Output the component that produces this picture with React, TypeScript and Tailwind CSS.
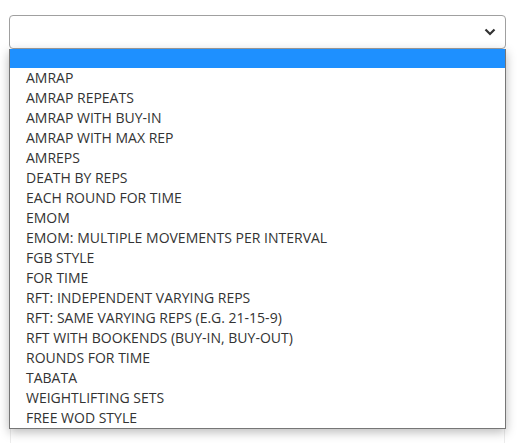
const options = [
  "AMRAP",
  "AMRAP REPEATS",
  "AMRAP WITH BUY-IN",
  "AMRAP WITH MAX REP",
  "AMREPS",
  "DEATH BY REPS",
  "EACH ROUND FOR TIME",
  "EMOM",
  "EMOM: MULTIPLE MOVEMENTS PER INTERVAL",
  "FGB STYLE",
  "FOR TIME",
  "RFT: INDEPENDENT VARYING REPS",
  "RFT: SAME VARYING REPS (E.G. 21-15-9)",
  "RFT WITH BOOKENDS (BUY-IN, BUY-OUT)",
  "ROUNDS FOR TIME",
  "TABATA",
  "WEIGHTLIFTING SETS",
  "FREE WOD STYLE",
];

export default function App() {
  return (
    <div className="h-[443px] w-[519px] overflow-hidden bg-white pt-[15px] font-['Open_Sans',sans-serif] text-[14px] text-[#333]">
      <div className="relative ml-[9px] w-[497px]">
        <div className="flex h-[34px] items-center justify-end rounded-[4px] border border-[#a0a0a0] bg-white pr-[9px]">
          <svg width="12" height="8" viewBox="0 0 12 8" className="text-[#333]" aria-hidden>
            <path d="M1.5 1.5 6 6l4.5-4.5" fill="none" stroke="currentColor" strokeWidth="2.2" />
          </svg>
        </div>
        {/* field behind the open list */}
        <div className="mx-px h-[420px] border-x border-[#ececec]" />
        <div className="absolute left-0 right-0 top-[34px] border border-t-0 border-[#767676] bg-white shadow-[0_3px_10px_rgba(0,0,0,0.28)]">
          <div className="h-[19px] bg-[#1e90ff]" />
          {options.map((o) => (
            <div key={o} className="flex h-[20px] items-center whitespace-nowrap pl-[16px] leading-none">
              {o}
            </div>
          ))}
        </div>
      </div>
    </div>
  );
}
